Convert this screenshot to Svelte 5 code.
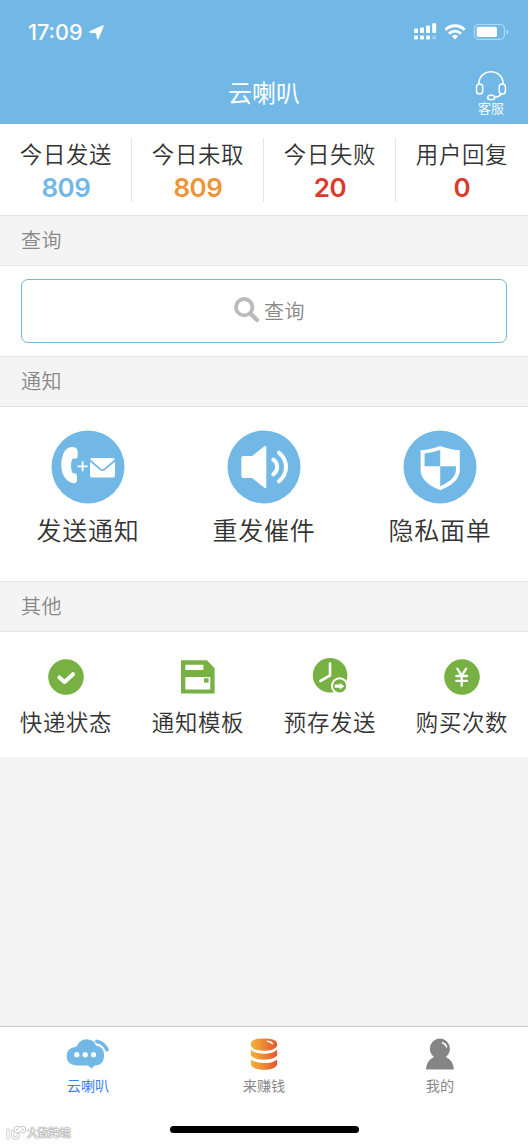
<script>
  const stats = [
    { label: '今日发送', value: 809, color: '#71b8e7' },
    { label: '今日未取', value: 809, color: '#ed9537' },
    { label: '今日失败', value: 20, color: '#dd3a2d' },
    { label: '用户回复', value: 0, color: '#dd3a2d' }
  ]

  const notices = [
    { label: '发送通知', icon: 'send' },
    { label: '重发催件', icon: 'speaker' },
    { label: '隐私面单', icon: 'shield' }
  ]

  const others = [
    { label: '快递状态', icon: 'check' },
    { label: '通知模板', icon: 'floppy' },
    { label: '预存发送', icon: 'clock' },
    { label: '购买次数', icon: 'yen' }
  ]

  const tabs = [
    { label: '云喇叭', icon: 'cloud' },
    { label: '来赚钱', icon: 'coins' },
    { label: '我的', icon: 'user' }
  ]

  let active = '云喇叭'
</script>

<main>
<header>
  <div class="statusbar">
    <span class="time">17:09</span>
    <svg class="arrow" width="15" height="15" viewBox="0 0 15 15"><path d="M14 1 L8.8 13.6 L7.8 7.4 L1 6.9 Z" fill="#fff" stroke="#fff" stroke-width="1.6" stroke-linejoin="round"/></svg>
    <svg class="device" width="96" height="18" viewBox="0 0 96 18" fill="#fff">
      <rect x="0" y="5.6" width="4" height="4.4" rx="1"/>
      <rect x="6" y="4.4" width="4" height="5.6" rx="1"/>
      <rect x="12" y="2.4" width="4" height="7.6" rx="1"/>
      <rect x="18.2" y=".3" width="4" height="9.7" rx="1"/>
      <rect x="0" y="12.4" width="4" height="4" rx="1"/>
      <rect x="6" y="12.4" width="4" height="4" rx="1"/>
      <rect x="12" y="12.4" width="4" height="4" rx="1"/>
      <rect x="18.2" y="12.4" width="4" height="4" rx="1" opacity=".3"/>
      <g fill="none" stroke="#fff" stroke-width="2.9">
        <path d="M31.4 6.7 A13.6 13.6 0 0 1 50.6 6.7"/>
        <path d="M35 10.6 A8.6 8.6 0 0 1 47 10.6"/>
      </g>
      <path d="M37.9 13.2 A4.6 4.6 0 0 1 44.1 13.2 L41 16.5 Z"/>
      <rect x="60.4" y="1.5" width="30" height="14.8" rx="4.2" fill="none" stroke="#fff" stroke-width="1.2" opacity=".45"/>
      <rect x="62.6" y="3.7" width="20.4" height="10.4" rx="2.2"/>
      <path d="M92.3 6.4 Q94.2 7 94.2 9 Q94.2 11 92.3 11.6 Z" opacity=".5"/>
    </svg>
  </div>
  <div class="titlebar">
    <h1>云喇叭</h1>
    <div class="service">
      <svg width="32" height="30" viewBox="0 0 32 30" fill="none" stroke="#fff" stroke-width="1.5">
        <path d="M3.9 13.2 V12.2 A12 11.3 0 0 1 28.1 12.2 V13.2"/>
        <rect x="1.5" y="13" width="6.2" height="10" rx="3.1"/>
        <rect x="24.2" y="13" width="6.2" height="10" rx="3.1"/>
        <path d="M26.6 22.6 Q24.6 26 19.4 26.3"/>
        <ellipse cx="16.2" cy="26.5" rx="3.6" ry="2.2"/>
      </svg>
      <span>客服</span>
    </div>
  </div>
</header>

<section class="stats">
  {#each stats as s}
    <div class="stat">
      <span class="label">{s.label}</span>
      <strong style="color: {s.color}">{s.value}</strong>
    </div>
  {/each}
</section>

<h2>查询</h2>
<section class="search">
  <button>
    <svg width="26" height="26" viewBox="0 0 26 26" fill="none" stroke="#bbb">
      <circle cx="10.2" cy="10.2" r="8.2" stroke-width="3.8"/>
      <path d="M16.6 16.6 L23 23" stroke-width="4.4" stroke-linecap="round"/>
    </svg>
    查询
  </button>
</section>

<h2>通知</h2>
<section class="notices">
  {#each notices as n}
    <div class="notice">
      <svg width="74" height="74" viewBox="0 0 74 74">
        <circle cx="37" cy="37" r="36.5" fill="#71b8e7"/>
        {#if n.icon == 'send'}
          <path d="M17.5 17.8 Q21.5 16.2 25 18 Q26.8 19 26.7 21.5 V26 Q26.6 28.6 24 28.6 H21.7 Q20 31 20 36 Q20 41 21.7 43.2 H23.8 Q26 43.4 26 46 V50.5 Q25.8 53.4 22.5 53.2 Q17 52.6 13.4 47 Q10.3 42 10.3 35 Q10.3 28 12.6 23 Q14.5 19 17.5 17.8 Z" fill="#fff"/>
          <path d="M31.6 31.3 V41.3 M26.6 36.3 H36.6" stroke="#fff" stroke-width="1.8"/>
          <rect x="39" y="28" width="25" height="19.6" rx="2.2" fill="#fff"/>
          <path d="M38.8 30.2 L49.4 39.4 Q51.5 41 53.6 39.4 L64.2 30.2" fill="none" stroke="#71b8e7" stroke-width="1.8"/>
        {:else if n.icon == 'speaker'}
          <path d="M16.5 27 H25.5 L38.3 16.7 V57.3 L25.5 47 H16.5 Q15.3 47 15.3 45.6 V28.4 Q15.3 27 16.5 27 Z" fill="#fff" stroke="#fff" stroke-width="2" stroke-linejoin="round"/>
          <g fill="none" stroke="#fff" stroke-width="4" stroke-linecap="round">
            <path d="M46.3 29.6 Q50.2 32.4 50.2 37 Q50.2 41.6 46.3 44.4"/>
            <path d="M52 22.7 Q59 28.6 59 37 Q59 45.4 52 51.3"/>
          </g>
        {:else}
          <path d="M37.2 16 Q46 19.5 56.8 20.2 V40 Q56.8 52.5 37.2 60.2 Q17.6 52.5 17.6 40 V20.2 Q28.4 19.5 37.2 16 Z" fill="#fff"/>
          <path d="M37.2 20 V36.3 H21.6 V23.4 Q30 22.6 37.2 20 Z" fill="#71b8e7"/>
          <path d="M37.2 36.3 H53 V39.6 Q52.8 49.6 37.2 56.2 Z" fill="#71b8e7"/>
        {/if}
      </svg>
      <span>{n.label}</span>
    </div>
  {/each}
</section>

<h2>其他</h2>
<section class="others">
  {#each others as o}
    <div class="other">
      <svg width="38" height="38" viewBox="0 0 38 38">
        {#if o.icon == 'check'}
          <circle cx="19" cy="19" r="17.8" fill="#77b043"/>
          <path d="M12.4 19.4 L17.6 24 L26 16.2" fill="none" stroke="#fff" stroke-width="4" stroke-linecap="round" stroke-linejoin="round"/>
        {:else if o.icon == 'floppy'}
          <path d="M2 2.2 H27.8 L35.6 10 V35.6 H2 Z" fill="#77b043"/>
          <path d="M6.3 6.8 H24.4 V12 H6.3 Z M6.3 18.9 H31.3 V31.4 H6.3 Z" fill="#fff"/>
          <rect x="25" y="20.2" width="4.6" height="4.4" fill="#77b043"/>
        {:else if o.icon == 'clock'}
          <circle cx="19.1" cy="17.3" r="17.3" fill="#77b043"/>
          <path d="M19 5.5 V17.5 L9.4 23" fill="none" stroke="#fff" stroke-width="2.6" stroke-linecap="round"/>
          <circle cx="28.6" cy="27.9" r="8.6" fill="#fff"/>
          <circle cx="28.6" cy="27.9" r="6.6" fill="#77b043"/>
          <path d="M23.8 26.6 H28.8 V24.9 L33.4 28.2 L28.8 31.4 V29.8 H23.8 Z" fill="#fff"/>
        {:else}
          <circle cx="19" cy="19" r="17.8" fill="#77b043"/>
          <path d="M14.3 10.7 L18.7 17.6 L23.1 10.7 M18.7 17.6 V27.8 M13.3 18 H24.1 M13.3 22.8 H24.1" fill="none" stroke="#fff" stroke-width="2.3" stroke-linecap="round"/>
        {/if}
      </svg>
      <span class="label">{o.label}</span>
    </div>
  {/each}
</section>

<div class="spacer"></div>

<nav>
  <div class="tabs">
    {#each tabs as t}
      <div class="tab" class:active={t.label == active}>
        <svg width="44" height="34" viewBox="0 0 44 34">
          {#if t.icon == 'cloud'}
            <path d="M10.5 8.7 Q13.5 1.2 20.6 1.2 Q27.6 1.2 30 7.4 Q38.1 8.7 38.1 17.5 Q38.1 27.4 28.2 27.8 L25.8 30.6 L21.8 27.6 H10.3 Q.6 26.6 .6 17.8 Q.6 9.9 10.5 8.7 Z" fill="#71b8e7"/>
            <path d="M30.8 3.4 Q37.9 4.6 41 11.8" fill="none" stroke="#71b8e7" stroke-width="3.6" stroke-linecap="round"/>
            <g fill="#fff"><circle cx="10.8" cy="16.7" r="2.6"/><circle cx="19.2" cy="16.7" r="2.6"/><circle cx="27.5" cy="16.7" r="2.6"/></g>
          {:else if t.icon == 'coins'}
            <defs>
              <linearGradient id="gold">
                <stop offset="0" stop-color="#f2b23c"/>
                <stop offset=".5" stop-color="#ed8734"/>
                <stop offset="1" stop-color="#e35729"/>
              </linearGradient>
            </defs>
            <g fill="url(#gold)">
              <path d="M8.9 5.4 Q9.5 .6 22 .6 Q34.5 .6 35.1 5.4 V8.1 Q33 12.8 22 12.8 Q11 12.8 8.9 8.1 Z"/>
              <path d="M8.9 11.8 Q13 15.7 22 15.7 Q31 15.7 35.1 11.8 V17.6 Q32 21.7 22 21.7 Q12 21.7 8.9 17.6 Z"/>
              <path d="M8.9 21.4 Q13 25 22 25 Q31 25 35.1 21.4 V26.8 Q33 31.8 22 31.8 Q11 31.8 8.9 26.8 Z"/>
            </g>
            <path d="M25.4 3.2 Q29 3.5 30.6 5.7" fill="none" stroke="#fff" stroke-width="1.6" stroke-linecap="round"/>
          {:else}
            <path d="M16 18.9 Q11.9 16 11.9 10.8 A10 10.2 0 0 1 31.9 10.8 Q31.9 16 27.8 18.9 Q35.1 22 36 31.6 H7.8 Q8.7 22 16 18.9 Z" fill="#858585"/>
            <path d="M24.6 4.8 Q27.6 6 28.6 8.8" fill="none" stroke="#fff" stroke-width="1.6" stroke-linecap="round"/>
          {/if}
        </svg>
        <span>{t.label}</span>
      </div>
    {/each}
  </div>
  <div class="home"></div>
  <div class="mark">
    <svg width="21" height="15" viewBox="0 0 21 15" fill="none" stroke-linecap="round">
      <g stroke="#bbb" stroke-width="3">
        <path d="M2 4 V12 M7 5 Q5.5 12 9.5 12 Q12 11.8 12.2 8.5"/><circle cx="11.3" cy="3.6" r="2"/><circle cx="16.6" cy="3.6" r="2"/>
      </g>
      <g stroke="#fff" stroke-width="1.7">
        <path d="M2 4 V12 M7 5 Q5.5 12 9.5 12 Q12 11.8 12.2 8.5"/><circle cx="11.3" cy="3.6" r="2"/><circle cx="16.6" cy="3.6" r="2"/>
      </g>
    </svg>
    大数跨境
  </div>
</nav>
</main>

<style>
:global(body) {
  background: #f4f4f4;
}

main {
  display: flex;
  flex-direction: column;
  height: 1144px;
  font-family: Inter, "Noto Sans CJK SC", sans-serif;
  color: #333;
}

header {
  height: 124px;
  background: #71b8e7;
  color: #fff;
}

.statusbar {
  display: flex;
  align-items: center;
  height: 64px;
  padding: 0 18px 0 28px;
}

.time {
  width: 57px;
  font-size: 21.6px;
  font-weight: 500;
}

.arrow {
  margin-left: 4px;
}

.device {
  margin-left: auto;
}

.titlebar {
  display: grid;
  grid-template-columns: 74px 1fr 74px;
  height: 60px;
}

h1 {
  grid-column: 2;
  margin: 0;
  font-size: 24px;
  font-weight: 400;
  line-height: 60px;
  text-align: center;
}

.service {
  display: flex;
  flex-direction: column;
  align-items: center;
  padding-top: 7px;
  font-size: 13px;
  font-weight: 350;
  line-height: 18px;
}

.service span {
  margin-top: -2px;
}

.stats, .notices, .others {
  display: flex;
  background: #fff;
}

.stats {
  height: 91px;
}

.stat {
  display: flex;
  flex: 1;
  flex-direction: column;
  align-items: center;
  height: 64px;
  margin-top: 14px;
  box-shadow: inset -1px 0 #e6e6e6;
}

.stat:last-child {
  box-shadow: none;
}

.label {
  font-size: 22.4px;
  font-weight: 350;
  letter-spacing: 0.7px;
  line-height: 34px;
  white-space: nowrap;
}

.stat strong {
  margin-top: -1px;
  font-size: 26px;
  font-weight: 600;
  letter-spacing: -0.4px;
  line-height: 34px;
}

h2 {
  box-sizing: border-box;
  height: 51px;
  margin: 0;
  padding-left: 21px;
  border: solid #e5e5e5;
  border-width: 1px 0;
  background: #f4f4f4;
  color: #888;
  font-size: 20px;
  font-weight: 350;
  letter-spacing: 0.6px;
  line-height: 51px;
}

.search {
  box-sizing: border-box;
  height: 90px;
  padding: 13px 21px;
  background: #fff;
}

button {
  display: flex;
  align-items: center;
  justify-content: center;
  gap: 4px;
  box-sizing: border-box;
  width: 100%;
  height: 64px;
  padding: 0 0 2px 11px;
  border: 1.5px solid #71b8e7;
  border-radius: 7px;
  background: #fff;
  color: #888;
  font: 350 20px "Noto Sans CJK SC", sans-serif;
  letter-spacing: 0.4px;
}

.notices {
  height: 174px;
}

.notice {
  display: flex;
  flex: 1;
  flex-direction: column;
  align-items: center;
  padding-top: 23px;
  font-size: 25px;
  font-weight: 350;
  letter-spacing: 0.7px;
  line-height: 36px;
}

.notice span {
  margin-top: 9px;
}

.others {
  height: 125px;
}

.other {
  display: flex;
  flex: 1;
  flex-direction: column;
  align-items: center;
  padding-top: 26px;
}

.other .label {
  margin-top: 10px;
}

.spacer {
  flex: 1;
}

nav {
  position: relative;
  box-sizing: border-box;
  height: 118px;
  border-top: 1px solid #ccc;
  background: #fff;
}

.tabs {
  display: flex;
  height: 99px;
}

.tab {
  display: flex;
  flex: 1;
  flex-direction: column;
  align-items: center;
  padding-top: 11px;
  color: #888;
  font-size: 14.2px;
  line-height: 20px;
}

.tab span {
  margin-top: 4px;
}

.tab.active {
  color: #3b7de9;
}

.home {
  width: 189px;
  height: 7px;
  margin: 0 auto;
  border-radius: 4px;
  background: #000;
}

/* watermark over the bottom left corner */
.mark {
  position: absolute;
  left: 6px;
  bottom: 3px;
  display: flex;
  align-items: center;
  color: #fff;
  font-size: 11px;
  line-height: 16px;
  text-shadow: 0 0 1px #777, 0 0 1px #888, 0 0 2px #999;
}
</style>
